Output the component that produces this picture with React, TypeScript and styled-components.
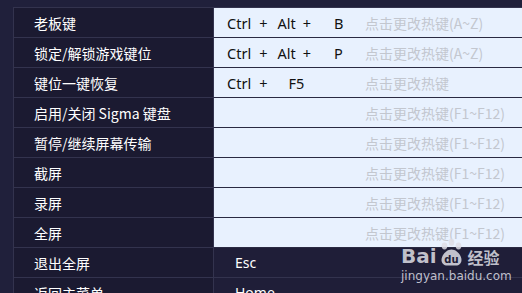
import React from 'react';
import styled, { createGlobalStyle } from 'styled-components';

const GlobalStyle = createGlobalStyle`
  html, body {
    margin: 0;
    padding: 0;
    background: #20203b;
    overflow: hidden;
  }
  body {
    font-family: "Noto Sans CJK SC", "Noto Sans", sans-serif;
  }
`;

const Page = styled.div`
  position: relative;
  width: 522px;
  height: 293px;
  padding: 7px 0 0 13px;
  box-sizing: border-box;
  overflow: hidden;
`;

const Table = styled.div`
  width: 620px;
  border-top: 1px solid #33334e;
  border-left: 1px solid #33334e;
`;

const Row = styled.div`
  display: grid;
  grid-template-columns: 200px 1fr;
  height: 30px;
`;

const NameCell = styled.div`
  display: flex;
  align-items: center;
  padding-left: 20px;
  background: #1b1a31;
  color: #ffffff;
  font-size: 14px;
  border-right: 1px solid #33334e;
  border-bottom: 1px solid #33334e;
`;

const KeyCell = styled.div<{ $light: boolean }>`
  display: flex;
  align-items: center;
  background: ${(p) => (p.$light ? '#e8f1fe' : '#1f1e38')};
  color: ${(p) => (p.$light ? '#111111' : '#ffffff')};
  font-size: 14px;
  border-bottom: 1px solid ${(p) => (p.$light ? '#2a2a42' : '#33334e')};
  padding-left: ${(p) => (p.$light ? '13px' : '21px')};
`;

const Combo = styled.div`
  display: flex;
  align-items: center;
  width: 138px;
  font-family: "Noto Sans", "Noto Sans CJK SC", sans-serif;
  font-size: 14.5px;
`;

const Token = styled.span<{ $gap: number }>`
  margin-left: ${(p) => p.$gap}px;
`;

const Hint = styled.span`
  color: #c3c7cf;
  font-size: 14px;
  white-space: nowrap;
`;

const Plain = styled.span`
  font-family: "Noto Sans", "Noto Sans CJK SC", sans-serif;
`;

const Watermark = styled.div`
  position: absolute;
  left: 401px;
  top: 237px;
  color: rgba(222, 222, 230, 0.85);
  font-family: "DejaVu Sans", sans-serif;
  pointer-events: none;
`;

const Logo = styled.div`
  display: flex;
  align-items: flex-end;
  height: 29px;
  font-weight: bold;
  font-size: 20px;
  line-height: 20px;
`;

const LogoCn = styled.span`
  font-family: "Noto Sans CJK SC", sans-serif;
  font-size: 16px;
  line-height: 18px;
  margin-left: 3px;
`;

const Domain = styled.div`
  font-size: 12px;
  line-height: 14px;
  margin-top: 3px;
`;

type Item = {
  name: string;
  keys?: { t: string; gap: number }[];
  hint?: string;
  plain?: string;
};

const AZ = '点击更改热键(A~Z)';
const FK = '点击更改热键(F1~F12)';

const items: Item[] = [
  {
    name: '老板键',
    keys: [
      { t: 'Ctrl', gap: 0 },
      { t: '+', gap: 8 },
      { t: 'Alt', gap: 10 },
      { t: '+', gap: 7 },
      { t: 'B', gap: 23 },
    ],
    hint: AZ,
  },
  {
    name: '锁定/解锁游戏键位',
    keys: [
      { t: 'Ctrl', gap: 0 },
      { t: '+', gap: 8 },
      { t: 'Alt', gap: 10 },
      { t: '+', gap: 7 },
      { t: 'P', gap: 23 },
    ],
    hint: AZ,
  },
  {
    name: '键位一键恢复',
    keys: [
      { t: 'Ctrl', gap: 0 },
      { t: '+', gap: 8 },
      { t: 'F5', gap: 21 },
    ],
    hint: '点击更改热键',
  },
  { name: '启用/关闭 Sigma 键盘', keys: [], hint: FK },
  { name: '暂停/继续屏幕传输', keys: [], hint: FK },
  { name: '截屏', keys: [], hint: FK },
  { name: '录屏', keys: [], hint: FK },
  { name: '全屏', keys: [], hint: FK },
  { name: '退出全屏', plain: 'Esc' },
  { name: '返回主菜单', plain: 'Home' },
];

const PawIcon = () => (
  <svg width="27" height="28" viewBox="0 0 27 28" style={{ marginLeft: 1 }}>
    <g fill="currentColor">
      <ellipse cx="6.5" cy="8" rx="2.8" ry="3.4" />
      <ellipse cx="13.5" cy="4.2" rx="2.8" ry="3.6" />
      <ellipse cx="20.5" cy="8" rx="2.8" ry="3.4" />
      <path d="M13.5 11.5c-5 0-10 5.5-10 10.5 0 3.2 2.6 5.6 5.6 5.6h8.8c3 0 5.6-2.4 5.6-5.6 0-5-5-10.5-10-10.5z" />
    </g>
    <text x="13.5" y="25" textAnchor="middle" fontSize="10" fontWeight="bold" fill="#1f1e38" fontFamily="DejaVu Sans, sans-serif">
      du
    </text>
  </svg>
);

export default function App() {
  return (
    <Page>
      <GlobalStyle />
      <Table>
        {items.map((it) => (
          <Row key={it.name}>
            <NameCell>{it.name}</NameCell>
            {it.plain ? (
              <KeyCell $light={false}>
                <Plain>{it.plain}</Plain>
              </KeyCell>
            ) : (
              <KeyCell $light>
                <Combo>
                  {it.keys!.map((k, i) => (
                    <Token key={i} $gap={k.gap}>
                      {k.t}
                    </Token>
                  ))}
                </Combo>
                <Hint>{it.hint}</Hint>
              </KeyCell>
            )}
          </Row>
        ))}
      </Table>
      <Watermark>
        <Logo>
          <span>Bai</span>
          <PawIcon />
          <LogoCn>经验</LogoCn>
        </Logo>
        <Domain>jingyan.baidu.com</Domain>
      </Watermark>
    </Page>
  );
}
